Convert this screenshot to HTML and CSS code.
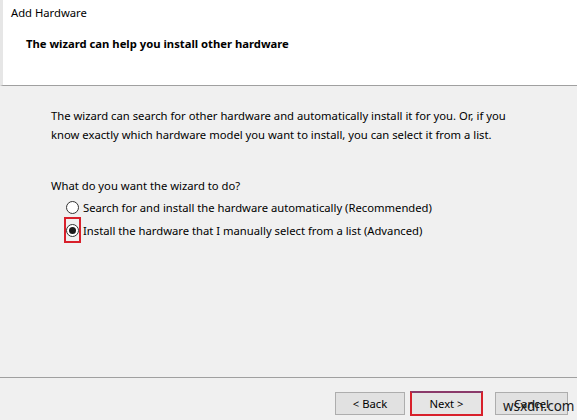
FILE: index.html
```html
<!DOCTYPE html>
<html>
<head>
<meta charset="utf-8">
<link rel="stylesheet" href="styles.css">
</head>
<body>
<div class="window">
  <div class="header">
    <div class="app-title">Add Hardware</div>
    <div class="page-title">The wizard can help you install other hardware</div>
  </div>
  <div class="content">
    <p class="intro">The wizard can search for other hardware and automatically install it for you. Or, if you<br>know exactly which hardware model you want to install, you can select it from a list.</p>
    <p class="question">What do you want the wizard to do?</p>
    <div class="options">
      <div class="option">
        <span class="radio-wrap"><span class="radio"></span></span>
        <span class="label">Search for and install the hardware automatically (Recommended)</span>
      </div>
      <div class="option">
        <span class="radio-wrap highlight"><span class="radio checked"></span></span>
        <span class="label">Install the hardware that I manually select from a list (Advanced)</span>
      </div>
    </div>
  </div>
  <div class="footer">
    <button class="btn">&lt; Back</button>
    <button class="btn btn-next">Next &gt;</button>
    <button class="btn btn-cancel">Cancel<span class="watermark">wsxdn.com</span></button>
  </div>
</div>
</body>
</html>
```
FILE: styles.css
```css
html, body {
  margin: 0;
  padding: 0;
}
body {
  width: 577px;
  height: 420px;
  overflow: hidden;
  font-family: "Noto Sans", "Open Sans", "DejaVu Sans", sans-serif;
  font-size: 11.25px;
  color: #000;
  background: #f0f0f0;
}
.window {
  display: flex;
  flex-direction: column;
  height: 420px;
}
.header {
  height: 86px;
  box-sizing: border-box;
  background: #fff;
  border-left: 3px solid #e6e6e6;
  border-bottom: 1px solid #a0a0a0;
  padding: 4px 0 0 8px;
}
.app-title {
  line-height: 17px;
}
.page-title {
  font-weight: bold;
  margin: 14px 0 0 15px;
  line-height: 17px;
}
.content {
  flex: 1;
  padding: 20px 0 0 51px;
  border-bottom: 1px solid #a0a0a0;
}
.intro {
  margin: 0;
  line-height: 19px;
}
.question {
  margin: 32px 0 0 0;
  line-height: 19px;
}
.options {
  margin-top: 1px;
  margin-left: 13px;
  display: flex;
  flex-direction: column;
  gap: 0;
}
.option {
  display: flex;
  align-items: center;
  height: 23px;
}
.radio-wrap {
  width: 17px;
  height: 26px;
  margin: -2px 2px -1px 0;
  box-sizing: border-box;
  display: flex;
  align-items: center;
  justify-content: center;
  border: 2px solid transparent;
}
.radio-wrap.highlight {
  border-color: #d8202b;
}
.radio {
  width: 13px;
  height: 13px;
  box-sizing: border-box;
  border: 1px solid #333;
  border-radius: 50%;
  background: #fff;
  display: flex;
  align-items: center;
  justify-content: center;
}
.radio.checked::after {
  content: "";
  width: 7px;
  height: 7px;
  border-radius: 50%;
  background: #1a1a1a;
}
.footer {
  height: 42px;
  display: flex;
  align-items: flex-start;
  padding: 14px 0 0 335px;
  box-sizing: border-box;
}
.btn {
  font-family: inherit;
  font-size: 11.25px;
  color: #000;
  width: 70px;
  height: 23px;
  box-sizing: border-box;
  background: #e1e1e1;
  border: 1px solid #adadad;
  padding: 0;
  position: relative;
}
.btn-next {
  width: 73px;
  height: 25px;
  margin-left: 5px;
  margin-top: -1px;
  border: 2px solid #d8202b;
  border-top-color: #8a3a6a;
  background: #e5e5e5;
}
.btn-cancel {
  width: 73px;
  margin-left: 12px;
}
.watermark {
  position: absolute;
  left: 7px;
  top: 4px;
  font-size: 13.5px;
  color: #1a1a1a;
}
```
